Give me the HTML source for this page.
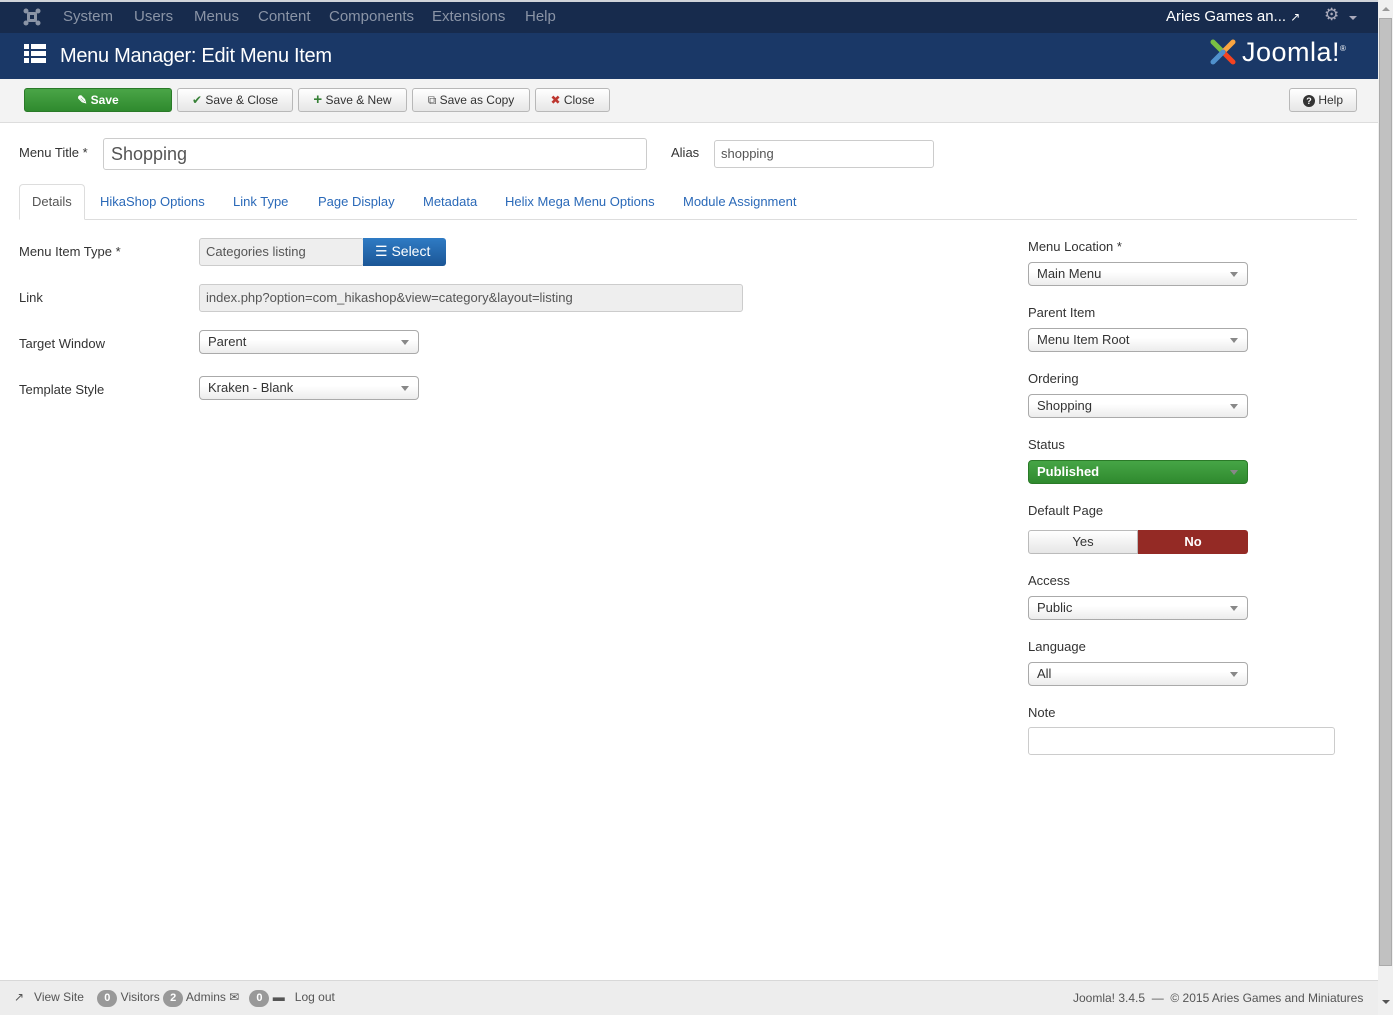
<!DOCTYPE html>
<html><head><meta charset="utf-8">
<style>
*{box-sizing:border-box;margin:0;padding:0}
body{width:1393px;height:1015px;overflow:hidden;background:#fff;font-family:"Liberation Sans",sans-serif;font-size:13px;color:#333;position:relative}
.a{position:absolute}
#top{left:0;top:0;width:1378px;height:33px;background:#172b4d;border-top:2px solid #d0d4da}
#top span.m{position:absolute;top:6px;font-size:15px;color:#8a94a6}
#hdr{left:0;top:33px;width:1378px;height:46px;background:#1a3867}
#tb{left:0;top:79px;width:1378px;height:44px;background:#f3f3f3;border-bottom:1px solid #ddd}
.btn{position:absolute;top:9px;height:24px;border:1px solid #b8b8b8;border-radius:3px;background:linear-gradient(#fff,#e6e6e6);font-size:12px;color:#333;line-height:22px;text-align:center;white-space:nowrap}
.lbl{position:absolute;font-size:13px;color:#333}
.sel{position:absolute;height:24px;border:1px solid #aaa;border-radius:4px;background:linear-gradient(#fff 40%,#ececec);font-size:13px;line-height:22px;padding-left:8px;color:#333}
.sel:after{content:"";position:absolute;right:9px;top:9px;border:4px solid transparent;border-top:5px solid #888}
.inp{position:absolute;border:1px solid #ccc;border-radius:3px;background:#fff}
.tab{position:absolute;top:194px;font-size:13px;color:#2a69b8}
#foot{left:0;top:980px;width:1378px;height:35px;background:#ededed;border-top:1px solid #d8d8d8;font-size:12px;color:#555}
.badge{display:inline-block;background:#999;color:#fff;border-radius:9px;padding:0 7px;font-size:11px;font-weight:bold;line-height:17px}
#sb{left:1378px;top:0;width:15px;height:1015px;background:#f0f0f0}
</style></head><body>
<div id="top" class="a">
 <svg class="a" style="left:23px;top:6px" width="18" height="18" viewBox="0 0 18 18"><g fill="#8a94a6"><circle cx="3" cy="3" r="2.5"/><circle cx="15" cy="3" r="2.5"/><circle cx="3" cy="15" r="2.5"/><circle cx="15" cy="15" r="2.5"/><rect x="4" y="4" width="10" height="10" rx="2"/></g><rect x="7" y="7" width="4" height="4" fill="#172b4d"/></svg>
 <span class="m" style="left:63px">System</span><span class="m" style="left:134px">Users</span><span class="m" style="left:194px">Menus</span><span class="m" style="left:258px">Content</span><span class="m" style="left:329px">Components</span><span class="m" style="left:432px">Extensions</span><span class="m" style="left:525px">Help</span>
 <span class="a" style="left:1166px;top:6px;font-size:15px;color:#fff">Aries Games an... <span style="font-size:12px">&#x2197;</span></span>
 <span class="a" style="left:1324px;top:3px;font-size:17px;color:#aab">&#9881;</span><span class="a" style="left:1349px;top:14px;border:4px solid transparent;border-top:4px solid #aab"></span>
</div>
<div id="hdr" class="a">
 <svg class="a" style="left:24px;top:11px" width="22" height="20"><g fill="#fff"><rect x="0" y="0" width="5" height="5"/><rect x="7" y="0" width="15" height="5"/><rect x="0" y="7" width="5" height="5"/><rect x="7" y="7" width="15" height="5"/><rect x="0" y="14" width="5" height="5"/><rect x="7" y="14" width="15" height="5"/></g></svg>
 <span class="a" style="left:60px;top:12px;font-size:20px;color:#fff;letter-spacing:-0.3px">Menu Manager: Edit Menu Item</span>
 <svg class="a" style="left:1208px;top:4px" width="30" height="30" viewBox="0 0 30 30"><g stroke-width="5" stroke-linecap="round" fill="none"><path d="M5 5 L15 15" stroke="#7ac143"/><path d="M25 5 L15 15" stroke="#f9a541"/><path d="M25 25 L15 15" stroke="#f44321"/><path d="M5 25 L15 15" stroke="#5091cd"/></g></svg>
 <span class="a" style="left:1242px;top:4px;font-size:27px;color:#fff;letter-spacing:0.5px">Joomla!<sup style="font-size:8px">®</sup></span>
</div>
<div id="tb" class="a">
 <div class="btn" style="left:24px;width:148px;background:linear-gradient(#4aa547,#2f8a2e);border-color:#2a7a28;color:#fff;font-weight:bold">&#9998; Save</div>
 <div class="btn" style="left:177px;width:116px"><span style="color:#378137">&#10004;</span> Save &amp; Close</div>
 <div class="btn" style="left:298px;width:109px"><b style="color:#378137;font-size:15px">+</b> Save &amp; New</div>
 <div class="btn" style="left:412px;width:118px"><span style="color:#555">&#10697;</span> Save as Copy</div>
 <div class="btn" style="left:535px;width:75px"><span style="color:#bd362f">&#10006;</span> Close</div>
 <div class="btn" style="left:1289px;width:68px"><b style="display:inline-block;width:12px;height:12px;border-radius:6px;background:#333;color:#fff;font-size:9px;line-height:12px;text-align:center">?</b> Help</div>
</div>
<span class="lbl" style="left:19px;top:145px">Menu Title *</span>
<div class="inp" style="left:103px;top:138px;width:544px;height:32px;font-size:18px;padding:5px 7px;color:#555">Shopping</div>
<span class="lbl" style="left:671px;top:145px">Alias</span>
<div class="inp" style="left:714px;top:140px;width:220px;height:28px;padding:5px 6px;color:#555">shopping</div>
<div class="a" style="left:19px;top:219px;width:1338px;border-top:1px solid #ddd"></div>
<div class="a" style="left:19px;top:184px;width:66px;height:36px;border:1px solid #ddd;border-bottom:1px solid #fff;border-radius:4px 4px 0 0;background:#fff"></div>
<span class="tab" style="left:32px;color:#555">Details</span><span class="tab" style="left:100px">HikaShop Options</span><span class="tab" style="left:233px">Link Type</span><span class="tab" style="left:318px">Page Display</span><span class="tab" style="left:423px">Metadata</span><span class="tab" style="left:505px">Helix Mega Menu Options</span><span class="tab" style="left:683px">Module Assignment</span>
<span class="lbl" style="left:19px;top:244px">Menu Item Type *</span>
<div class="inp" style="left:199px;top:238px;width:165px;height:28px;background:#eee;padding:5px 6px;color:#555">Categories listing</div>
<div class="a" style="left:363px;top:238px;width:83px;height:28px;background:linear-gradient(#2f7bc4,#1b5696);border-radius:0 3px 3px 0;color:#fff;font-size:14px;line-height:27px;padding-left:12px">&#9776; Select</div>
<span class="lbl" style="left:19px;top:290px">Link</span>
<div class="inp" style="left:199px;top:284px;width:544px;height:28px;background:#eee;padding:5px 6px;color:#555">index.php?option=com_hikashop&amp;view=category&amp;layout=listing</div>
<span class="lbl" style="left:19px;top:336px">Target Window</span>
<div class="sel" style="left:199px;top:330px;width:220px">Parent</div>
<span class="lbl" style="left:19px;top:382px">Template Style</span>
<div class="sel" style="left:199px;top:376px;width:220px">Kraken - Blank</div>
<span class="lbl" style="left:1028px;top:239px">Menu Location *</span>
<div class="sel" style="left:1028px;top:262px;width:220px">Main Menu</div>
<span class="lbl" style="left:1028px;top:305px">Parent Item</span>
<div class="sel" style="left:1028px;top:328px;width:220px">Menu Item Root</div>
<span class="lbl" style="left:1028px;top:371px">Ordering</span>
<div class="sel" style="left:1028px;top:394px;width:220px">Shopping</div>
<span class="lbl" style="left:1028px;top:437px">Status</span>
<div class="sel" style="left:1028px;top:460px;width:220px;background:linear-gradient(#46a546,#2f8a2e);border-color:#2a7a28;color:#fff;font-weight:bold">Published</div>
<span class="lbl" style="left:1028px;top:503px">Default Page</span>
<div class="a" style="left:1028px;top:530px;width:110px;height:24px;border:1px solid #bbb;border-radius:3px 0 0 3px;background:linear-gradient(#fff,#e6e6e6);text-align:center;line-height:22px">Yes</div>
<div class="a" style="left:1138px;top:530px;width:110px;height:24px;background:#942a25;border-radius:0 3px 3px 0;color:#fff;font-weight:bold;text-align:center;line-height:23px">No</div>
<span class="lbl" style="left:1028px;top:573px">Access</span>
<div class="sel" style="left:1028px;top:596px;width:220px">Public</div>
<span class="lbl" style="left:1028px;top:639px">Language</span>
<div class="sel" style="left:1028px;top:662px;width:220px">All</div>
<span class="lbl" style="left:1028px;top:705px">Note</span>
<div class="inp" style="left:1028px;top:727px;width:307px;height:28px"></div>
<div id="foot" class="a">
 <span class="a" style="left:14px;top:9px">&#x2197;&nbsp;&nbsp; View Site &nbsp;&nbsp;&nbsp;<span class="badge">0</span> Visitors <span class="badge">2</span> Admins &#9993; &nbsp;&nbsp;<span class="badge">0</span> &#9644; &nbsp;&nbsp;Log out</span>
 <span class="a" style="left:1073px;top:10px">Joomla! 3.4.5 &nbsp;— &nbsp;© 2015 Aries Games and Miniatures</span>
</div>
<div id="sb" class="a">
 <div class="a" style="left:1px;top:18px;width:13px;height:948px;background:#c1c1c1;border:1px solid #aaa"></div>
 <div class="a" style="left:4px;top:7px;border:4px solid transparent;border-bottom:4px solid #999;border-top:0"></div>
 <div class="a" style="left:4px;top:1000px;border:4px solid transparent;border-top:4px solid #555;border-bottom:0"></div>
</div>
</body></html>
